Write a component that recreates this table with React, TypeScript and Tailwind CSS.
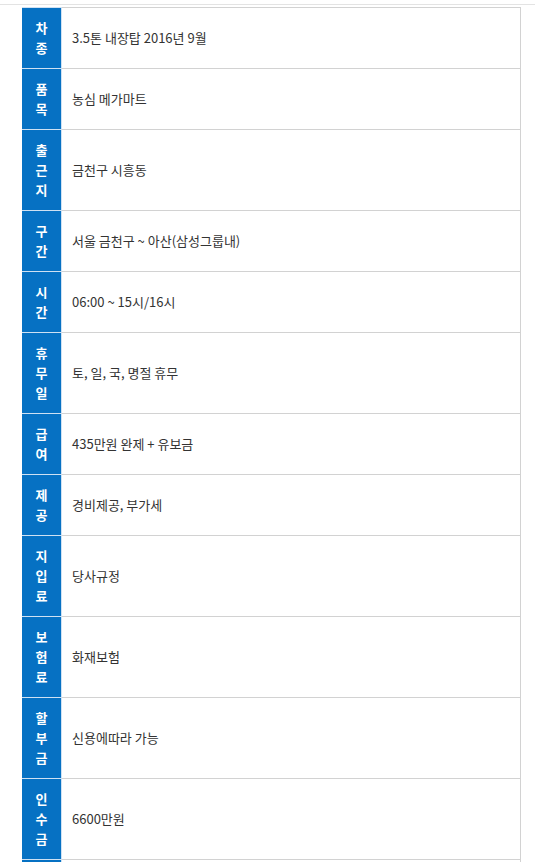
const rows: { label: string; value: string }[] = [
  { label: "차종", value: "3.5톤 내장탑 2016년 9월" },
  { label: "품목", value: "농심 메가마트" },
  { label: "출근지", value: "금천구 시흥동" },
  { label: "구간", value: "서울 금천구 ~ 아산(삼성그룹내)" },
  { label: "시간", value: "06:00 ~ 15시/16시" },
  { label: "휴무일", value: "토, 일, 국, 명절 휴무" },
  { label: "급여", value: "435만원 완제 + 유보금" },
  { label: "제공", value: "경비제공, 부가세" },
  { label: "지입료", value: "당사규정" },
  { label: "보험료", value: "화재보험" },
  { label: "할부금", value: "신용에따라 가능" },
  { label: "인수금", value: "6600만원" },
  { label: "", value: "" },
];

export default function App() {
  return (
    <div className="h-[862px] overflow-hidden bg-white font-['Noto_Sans_CJK_KR',sans-serif] text-[13px]">
      <div className="mt-[4px] h-px w-[535px] bg-[#e3e3e3]" />
      <div className="ml-[22px] mt-[2px] w-[499px] border-r border-[#d2d2d2]">
        {rows.map((row, i) => (
          <div key={i} className="flex">
            <div
              className={`flex min-h-[61px] w-[40px] shrink-0 flex-col items-center border-b border-r border-[#cfe1f3] bg-[#0671c3] py-[10px] font-bold leading-[20px] text-white ${
                i === 0 ? "border-t" : ""
              }`}
            >
              {row.label.split("").map((ch, j) => (
                <span key={j}>{ch}</span>
              ))}
            </div>
            <div
              className={`flex flex-1 items-center border-b border-[#d2d2d2] px-[10px] text-[#333] ${
                i === 0 ? "border-t" : ""
              }`}
            >
              {row.value}
            </div>
          </div>
        ))}
      </div>
    </div>
  );
}
